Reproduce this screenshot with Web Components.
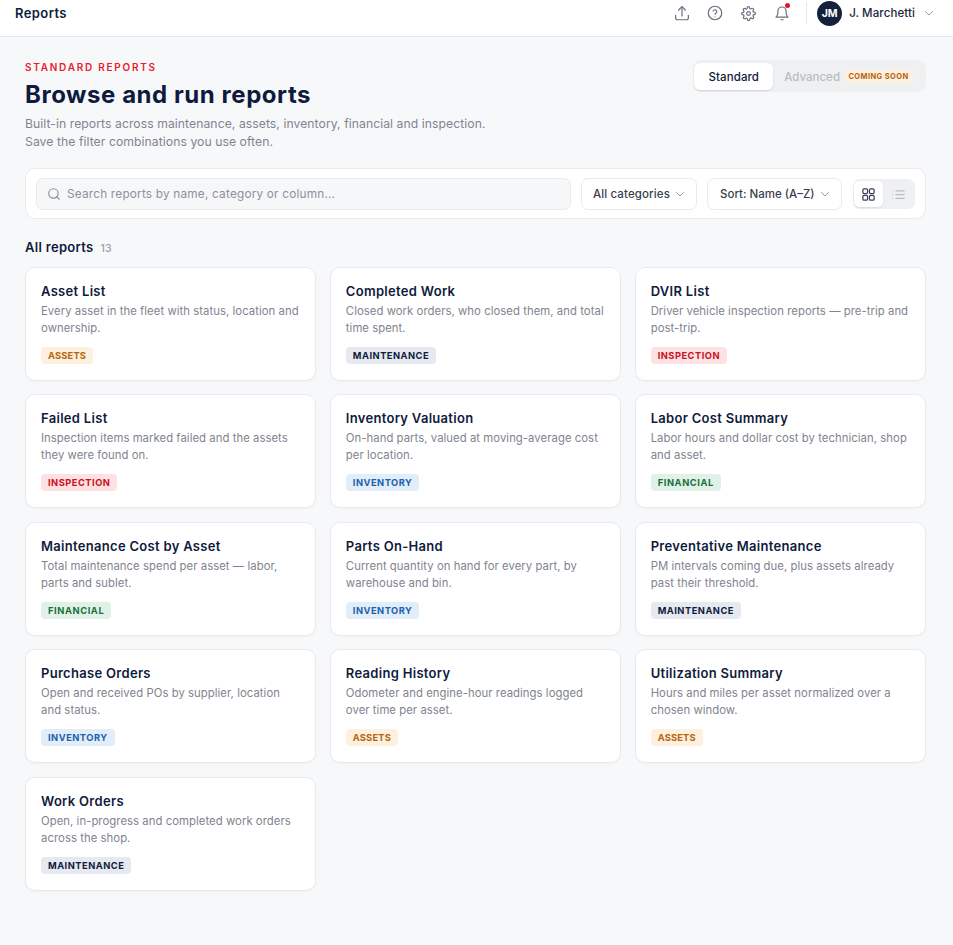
<!DOCTYPE html>
<html>
<head>
<meta charset="utf-8">
<title>Reports</title>
<style>
    html, body { margin: 0; padding: 0; }
    body {
        background: #f7f8fa;
        font-family: Inter, "Liberation Sans", sans-serif;
        color: #0f1b3d;
    }
</style>
</head>
<body>
<app-topbar></app-topbar>
<report-page></report-page>

<script>
const CATS = {
    assets: ['ASSETS', '#fdf0de', '#b4650f', '.2px'],
    maintenance: ['MAINTENANCE', '#e6e9f0', '#0f1b3d', '.5px'],
    inspection: ['INSPECTION', '#fde1e3', '#cc0f22', '.5px'],
    inventory: ['INVENTORY', '#e1edf8', '#1c62ad', '.5px'],
    financial: ['FINANCIAL', '#e2f1e7', '#17713c', '.6px'],
};

const REPORTS = [
    ['Asset List', 'Every asset in the fleet with status, location and ownership.', 'assets'],
    ['Completed Work', 'Closed work orders, who closed them, and total time spent.', 'maintenance'],
    ['DVIR List', 'Driver vehicle inspection reports — pre-trip and post-trip.', 'inspection'],
    ['Failed List', 'Inspection items marked failed and the assets they were found on.', 'inspection'],
    ['Inventory Valuation', 'On-hand parts, valued at moving-average cost per location.', 'inventory'],
    ['Labor Cost Summary', 'Labor hours and dollar cost by technician, shop and asset.', 'financial'],
    ['Maintenance Cost by Asset', 'Total maintenance spend per asset — labor, parts and sublet.', 'financial'],
    ['Parts On-Hand', 'Current quantity on hand for every part, by warehouse and bin.', 'inventory'],
    ['Preventative Maintenance', 'PM intervals coming due, plus assets already past their threshold.', 'maintenance'],
    ['Purchase Orders', 'Open and received POs by supplier, location and status.', 'inventory'],
    ['Reading History', 'Odometer and engine-hour readings logged over time per asset.', 'assets'],
    ['Utilization Summary', 'Hours and miles per asset normalized over a chosen window.', 'assets'],
    ['Work Orders', 'Open, in-progress and completed work orders across the shop.', 'maintenance'],
];

const chevron = `<svg width="12" height="12" viewBox="0 0 24 24" fill="none" stroke="currentColor" stroke-width="1.8" stroke-linecap="round" stroke-linejoin="round"><path d="M5 9l7 7 7-7"/></svg>`;

class AppTopbar extends HTMLElement {
    constructor() {
        super();
        this.attachShadow({ mode: 'open' });
        this.shadowRoot.innerHTML = `
<style>
    :host {
        display: flex;
        align-items: center;
        height: 36px;
        padding: 0 18px 0 15px;
        background: #fff;
        border-bottom: 1px solid #e6e7ea;
    }
    .title { font-size: 13px; font-weight: 600; letter-spacing: .4px; color: #0f1b3d; flex-grow: 1; margin-top: -11px; line-height: 16px; }
    .icons { display: flex; gap: 15.5px; align-items: center; color: #6b7080; margin-top: -10px; }
    .icons > span { position: relative; display: flex; align-items: center; justify-content: center; width: 18px; height: 18px; }
    .dot { position: absolute; top: -1px; right: 1px; width: 5px; height: 5px; background: #e8112d; border-radius: 50%; }
    .sep { width: 1px; height: 22px; background: #e6e7ea; margin: -10px 10px 0 15px; }
    .user { display: flex; align-items: center; gap: 7px; font-size: 11.5px; font-weight: 500; letter-spacing: .1px; margin-top: -10px; color: #1c2540; }
    .avatar { width: 25px; height: 25px; border-radius: 50%; background: #14213d; color: #fff; font-size: 10.5px; font-weight: 700; letter-spacing: 0; display: flex; align-items: center; justify-content: center; }
    .user svg { color: #8a8f9c; margin-left: 1px; }
</style>
<span class="title">Reports</span>
<div class="icons">
    <span><svg width="18" height="18" viewBox="0 0 24 24" fill="none" stroke="currentColor" stroke-width="1.6" stroke-linecap="round" stroke-linejoin="round"><path d="M3.500 15v3.500a2.500 2.500 0 0 0 2.500 2.500h12a2.500 2.500 0 0 0 2.500-2.500V15"/><path d="M12 16V3.500"/><path d="M7.500 8L12 3.500 16.500 8"/></svg></span>
    <span><svg width="18" height="18" viewBox="0 0 24 24" fill="none" stroke="currentColor" stroke-width="1.6" stroke-linecap="round" stroke-linejoin="round"><circle cx="12" cy="12" r="9"/><path d="M9.500 9.500a2.500 2.500 0 0 1 4.900.6c0 1.700-2.400 2.100-2.400 3.600"/><path d="M12 17h.01"/></svg></span>
    <span><svg width="15" height="15" viewBox="0 0 24 24" fill="none" stroke="currentColor" stroke-width="1.900" stroke-linecap="round" stroke-linejoin="round"><circle cx="12" cy="12" r="3"/><path d="M19.400 15a1.650 1.650 0 0 0 .33 1.820l.06.06a2 2 0 1 1-2.830 2.830l-.06-.06a1.650 1.650 0 0 0-2.800 1.170V21a2 2 0 1 1-4 0v-.09A1.650 1.650 0 0 0 7.300 19.700l-.06.06a2 2 0 1 1-2.830-2.830l.06-.06a1.650 1.650 0 0 0-1.170-2.800H3a2 2 0 1 1 0-4h.09A1.650 1.650 0 0 0 4.300 7.300l-.06-.06a2 2 0 1 1 2.830-2.830l.06.06a1.650 1.650 0 0 0 2.800-1.170V3a2 2 0 1 1 4 0v.09a1.650 1.650 0 0 0 2.800 1.170l.06-.06a2 2 0 1 1 2.830 2.830l-.06.06a1.650 1.650 0 0 0 1.170 2.800H21a2 2 0 1 1 0 4h-.09a1.650 1.650 0 0 0-1.510 1z"/></svg></span>
    <span><svg width="18" height="18" viewBox="0 0 24 24" fill="none" stroke="currentColor" stroke-width="1.6" stroke-linecap="round" stroke-linejoin="round"><path d="M20 17.500H4c1.500-1.400 2.500-3 2.500-5.500V9.500a5.500 5.500 0 0 1 11 0V12c0 2.500 1 4.100 2.500 5.500z"/><path d="M10.500 21h3"/></svg><i class="dot"></i></span>
</div>
<span class="sep"></span>
<div class="user"><span class="avatar">JM</span><span>J. Marchetti</span>${chevron}</div>
`;
    }
}

class ModeToggle extends HTMLElement {
    constructor() {
        super();
        this.attachShadow({ mode: 'open' });
        this.shadowRoot.innerHTML = `
<style>
    :host {
        display: inline-flex;
        align-items: center;
        height: 32px;
        margin-top: -1px;
        padding: 1px 13px 0 1px;
        box-sizing: border-box;
        background: #eff0f2;
        border-radius: 8px;
        font-size: 11.500px;
        font-weight: 500;
    }
    .on {
        display: flex; align-items: center; justify-content: center;
        width: 79px; height: 27px; background: #fff; border-radius: 6px;
        color: #0f1b3d; letter-spacing: .1px; box-shadow: 0 1px 2px rgba(15,27,61,.12);
    }
    .off { color: #b9bcc4; margin-left: 11px; }
    .soon {
        margin-left: 4px; width: 69px; height: 13px; line-height: 13px; text-align: center; border-radius: 4px; background: #fdf0de; color: #b4650f;
        font-size: 7.500px; font-weight: 700; letter-spacing: .4px;
    }
</style>
<span class="on">Standard</span><span class="off">Advanced</span><span class="soon">COMING SOON</span>
`;
    }
}

class PageHeader extends HTMLElement {
    constructor() {
        super();
        this.attachShadow({ mode: 'open' });
        this.shadowRoot.innerHTML = `
<style>
    :host { display: flex; justify-content: space-between; align-items: flex-start; }
    .eyebrow { font-size: 10px; line-height: 12px; font-weight: 600; letter-spacing: 1.750px; color: #ea1c2d; }
    h1 { margin: 7px 0 0; font-size: 24px; line-height: 30px; font-weight: 700; color: #0f1b3d; letter-spacing: .55px; }
    p { margin: 5px 0 0; font-size: 12.200px; line-height: 18px; letter-spacing: .06px; color: #80848f; }
</style>
<div>
    <div class="eyebrow">STANDARD REPORTS</div>
    <h1>Browse and run reports</h1>
    <p>Built-in reports across maintenance, assets, inventory, financial and inspection.<br>Save the filter combinations you use often.</p>
</div>
<mode-toggle></mode-toggle>
`;
    }
}

class FilterBar extends HTMLElement {
    constructor() {
        super();
        this.attachShadow({ mode: 'open' });
        this.shadowRoot.innerHTML = `
<style>
    :host {
        display: flex; align-items: center; gap: 10px;
        height: 51px; padding: 1px 10px 0; box-sizing: border-box;
        background: #fff; border: 1px solid #e9eaed; border-radius: 10px;
    }
    .search {
        flex-grow: 1; display: flex; align-items: center; gap: 6px; height: 32px; padding: 0 10px; box-sizing: border-box;
        background: #f6f7f9; border: 1px solid #e9eaed; border-radius: 7px;
        font-size: 11.800px; letter-spacing: .2px; color: #8d919c;
    }
    .search svg { color: #8d919c; flex-shrink: 0; }
    .select {
        display: flex; align-items: center; justify-content: space-between; height: 32px; padding: 0 10px 0 11px; box-sizing: border-box;
        background: #fff; border: 1px solid #e9eaed; border-radius: 7px;
        font-size: 11.500px; font-weight: 500; color: #3a3f50;
    }
    .select svg { color: #8a8f9c; }
    .cat { width: 116px; }
    .cat span { letter-spacing: .12px; }
    .sort { width: 135px; padding-left: 12px; }
    .views { display: flex; width: 62px; height: 30px; margin-left: 1px; padding: 2px 2px 2px 1px; box-sizing: border-box; background: #eff0f2; border-radius: 7px; }
    .views span { display: flex; align-items: center; justify-content: center; width: 29px; border-radius: 5px; }
    .views .on { background: #fff; color: #3a4055; box-shadow: 0 1px 2px rgba(15,27,61,.1); }
    .views .off { color: #b9bcc4; margin-left: 2px; }
</style>
<div class="search">
    <svg width="14" height="14" viewBox="0 0 24 24" fill="none" stroke="currentColor" stroke-width="2" stroke-linecap="round"><circle cx="11" cy="11" r="8"/><path d="M21 21l-4.300-4.300"/></svg>
    <span>Search reports by name, category or column...</span>
</div>
<div class="select cat"><span>All categories</span>${chevron}</div>
<div class="select sort"><span>Sort: Name (A–Z)</span>${chevron}</div>
<div class="views">
    <span class="on"><svg width="15" height="15" viewBox="0 0 24 24" fill="none" stroke="currentColor" stroke-width="2"><rect x="3" y="3" width="7.500" height="7.500" rx="2"/><rect x="13.500" y="3" width="7.500" height="7.500" rx="2"/><rect x="3" y="13.500" width="7.500" height="7.500" rx="2"/><rect x="13.500" y="13.500" width="7.500" height="7.500" rx="2"/></svg></span>
    <span class="off"><svg width="15" height="15" viewBox="0 0 24 24" fill="none" stroke="currentColor" stroke-width="2" stroke-linecap="round"><path d="M8 6h13M8 12h13M8 18h13M3 6h.01M3 12h.01M3 18h.01"/></svg></span>
</div>
`;
    }
}

class CategoryTag extends HTMLElement {
    constructor() {
        super();
        this.attachShadow({ mode: 'open' });
        const [label, bg, fg, spacing] = CATS[this.getAttribute('category')];
        this.shadowRoot.innerHTML = `
<style>
    :host {
        display: block; width: fit-content; height: 17px; line-height: 17px; padding: 0 7px; border-radius: 4px;
        font-size: 9.300px; font-weight: 700; letter-spacing: ${spacing};
        background: ${bg}; color: ${fg};
    }
</style>
${label}
`;
    }
}

class ReportCard extends HTMLElement {
    constructor() {
        super();
        this.attachShadow({ mode: 'open' });
        this.shadowRoot.innerHTML = `
<style>
    :host {
        display: block; height: 114px; padding: 15px; box-sizing: border-box;
        background: #fff; border: 1px solid #e9eaed; border-radius: 10px;
        box-shadow: 0 1px 2px rgba(15,27,61,.03);
    }
    .name { font-size: 13px; line-height: 17px; font-weight: 600; letter-spacing: .3px; color: #0f1b3d; }
    .desc { margin: 3px 0 10px; height: 34px; font-size: 11.300px; line-height: 17px; letter-spacing: .06px; color: #80848f; }
</style>
<div class="name"><slot name="name"></slot></div>
<div class="desc"><slot name="desc"></slot></div>
<slot name="tag"></slot>
`;
    }
}

class ReportPage extends HTMLElement {
    constructor() {
        super();
        this.attachShadow({ mode: 'open' });
        const cards = REPORTS.map(([name, desc, cat]) => `
<report-card>
    <span slot="name">${name}</span>
    <span slot="desc">${desc}</span>
    <category-tag slot="tag" category="${cat}"></category-tag>
</report-card>`).join('');
        this.shadowRoot.innerHTML = `
<style>
    :host { display: block; padding: 24px 27px 54px 25px; }
    filter-bar { margin-top: 17px; }
    .heading { display: flex; align-items: baseline; gap: 7px; margin: 20px 0 9.800px; line-height: 16px; font-size: 13px; font-weight: 600; letter-spacing: .3px; color: #0f1b3d; }
    .heading span { font-size: 10.500px; font-weight: 500; color: #9a9ea8; }
    .grid { display: grid; grid-template-columns: repeat(3, 1fr); gap: 13.500px 13.500px; }
</style>
<page-header></page-header>
<filter-bar></filter-bar>
<div class="heading">All reports <span>13</span></div>
<div class="grid">${cards}</div>
`;
    }
}

customElements.define('app-topbar', AppTopbar);
customElements.define('mode-toggle', ModeToggle);
customElements.define('page-header', PageHeader);
customElements.define('filter-bar', FilterBar);
customElements.define('category-tag', CategoryTag);
customElements.define('report-card', ReportCard);
customElements.define('report-page', ReportPage);
</script>
</body>
</html>
